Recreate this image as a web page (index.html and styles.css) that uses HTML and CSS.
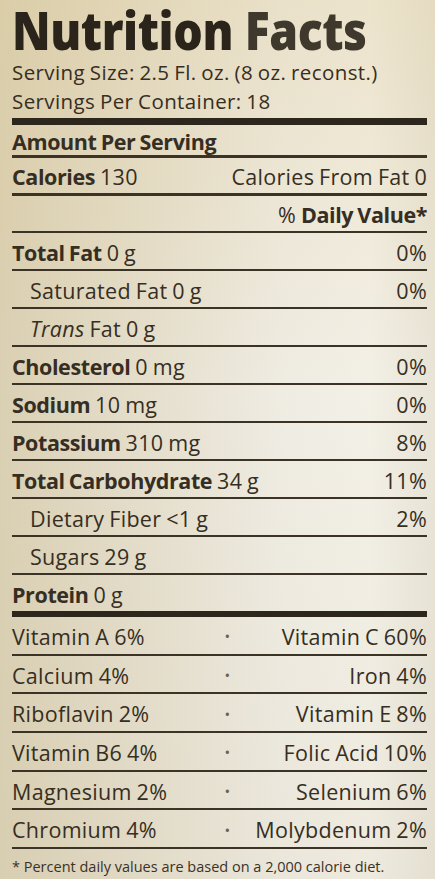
FILE: index.html
```html
<!DOCTYPE html>
<html lang="en">
<head>
  <meta charset="UTF-8">
  <title>Nutrition Facts</title>
  <link rel="stylesheet" href="styles.css">
</head>
<body>
<div class="label">
  <h1>Nutrition <span class="glare">Facts</span></h1>
  <div class="serving">Serving Size: 2.5 Fl. oz. (8 oz. reconst.)</div>
  <div class="serving">Servings Per Container: 18</div>
  <div class="bar"></div>

  <div class="row amount"><b>Amount Per Serving</b></div>
  <div class="row thick"><span><b>Calories</b> 130</span><span>Calories From Fat 0</span></div>
  <div class="row dv"><span></span><span>% <b>Daily Value*</b></span></div>

  <div class="row"><span><b>Total Fat</b> 0 g</span><span>0%</span></div>
  <div class="row sub"><span>Saturated Fat 0 g</span><span>0%</span></div>
  <div class="row sub"><span><i>Trans</i> Fat 0 g</span><span></span></div>
  <div class="row"><span><b>Cholesterol</b> 0 mg</span><span>0%</span></div>
  <div class="row"><span><b>Sodium</b> 10 mg</span><span>0%</span></div>
  <div class="row"><span><b>Potassium</b> 310 mg</span><span>8%</span></div>
  <div class="row"><span><b>Total Carbohydrate</b> 34 g</span><span>11%</span></div>
  <div class="row sub"><span>Dietary Fiber &lt;1 g</span><span>2%</span></div>
  <div class="row sub"><span>Sugars 29 g</span><span></span></div>
  <div class="row last"><span><b>Protein</b> 0 g</span><span></span></div>
  <div class="bar small"></div>

  <div class="row vit"><span>Vitamin A 6%</span><span class="dot">•</span><span class="right">Vitamin C 60%</span></div>
  <div class="row vit"><span>Calcium 4%</span><span class="dot">•</span><span class="right">Iron 4%</span></div>
  <div class="row vit"><span>Riboflavin 2%</span><span class="dot">•</span><span class="right">Vitamin E 8%</span></div>
  <div class="row vit"><span>Vitamin B6 4%</span><span class="dot">•</span><span class="right">Folic Acid 10%</span></div>
  <div class="row vit"><span>Magnesium 2%</span><span class="dot">•</span><span class="right">Selenium 6%</span></div>
  <div class="row vit"><span>Chromium 4%</span><span class="dot">•</span><span class="right">Molybdenum 2%</span></div>

  <p class="note">* Percent daily values are based on a 2,000 calorie diet.</p>
</div>
</body>
</html>
```

FILE: styles.css
```css
html, body {
  margin: 0;
  padding: 0;
}
body {
  width: 435px;
  height: 879px;
  overflow: hidden;
  font-family: 'Open Sans', 'DejaVu Sans', sans-serif;
  color: #362e22;
  background:
    linear-gradient(to bottom, rgba(220, 198, 140, 0.3), rgba(225, 205, 150, 0) 45%, rgba(200, 190, 160, 0.12) 100%),
    linear-gradient(to right, #dad0b4 0%, #e4ddca 30%, #efece3 65%, #f3f0e7 85%, #e8e4d7 100%);
}
.label {
  padding: 0 8px 0 12px;
}
h1 {
  margin: 0;
  padding-top: 2px;
  height: 56px;
  font-size: 53px;
  line-height: 56px;
  font-weight: 800;
  letter-spacing: -0.5px;
  white-space: nowrap;
  transform: scaleX(0.875);
  transform-origin: left center;
  color: #2b241b;
}
h1 .glare {
  color: #3f382d;
}
.serving {
  font-size: 20.5px;
  line-height: 29px;
  letter-spacing: 0.4px;
  word-spacing: -1px;
  white-space: nowrap;
}
.bar {
  height: 7px;
  background: #2d261c;
  margin-top: 2px;
}
.bar.small {
  height: 6px;
  margin-top: 0;
}
.row {
  box-sizing: border-box;
  height: 38px;
  border-bottom: 2px solid #3b3326;
  display: flex;
  justify-content: space-between;
  align-items: center;
  padding-top: 2px;
  font-size: 21.5px;
  letter-spacing: 0.3px;
  word-spacing: -1px;
  white-space: nowrap;
}
.row b {
  font-weight: 700;
  letter-spacing: -0.4px;
}
.row.amount {
  height: 33px;
  border-bottom-width: 3px;
}
.row.thick {
  border-bottom-width: 3px;
}
.row.dv {
  height: 37px;
}
.row.sub {
  padding-left: 18px;
}
.row.last {
  border-bottom: none;
  height: 36px;
}
.row.vit {
  height: 38.7px;
}
.row.vit > span:first-child {
  flex: 1;
}
.row.vit .right {
  flex: 1;
  text-align: right;
}
.row.vit .dot {
  width: 40px;
  padding-left: 16px;
  box-sizing: border-box;
  text-align: center;
  font-size: 15px;
  color: #6a6252;
}
.note {
  margin: 8px 0 0;
  font-size: 14.5px;
  letter-spacing: 0;
  color: #3a3226;
  white-space: nowrap;
}
```
